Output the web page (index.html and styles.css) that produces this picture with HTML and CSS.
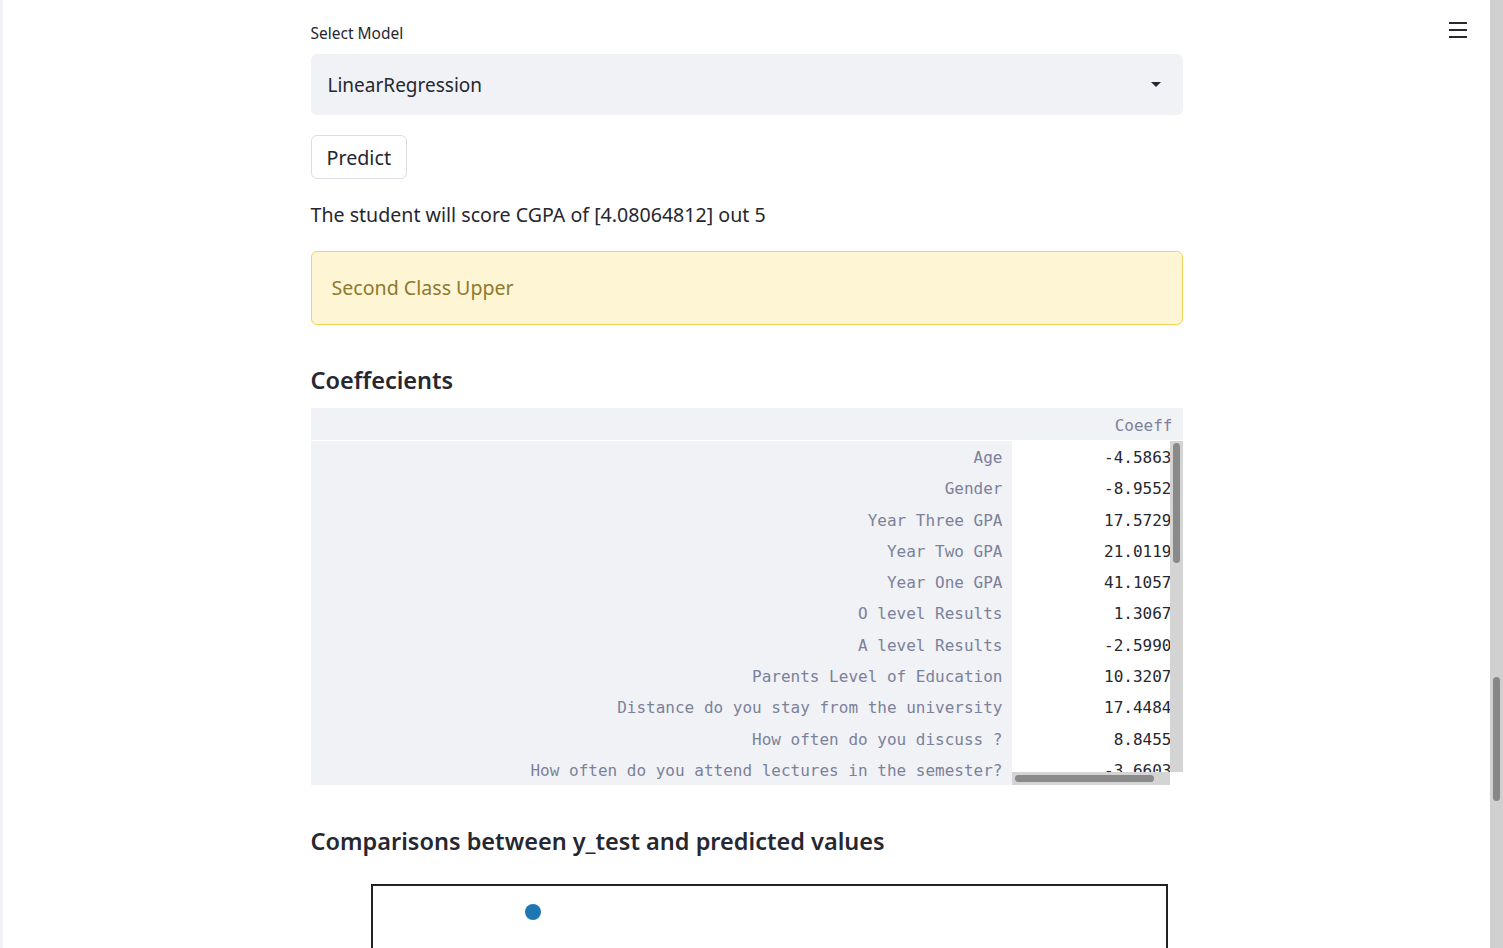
FILE: index.html
```html
<!DOCTYPE html>
<html>
<head>
<meta charset="utf-8">
<title>Student CGPA Prediction</title>
<link rel="stylesheet" href="styles.css">
</head>
<body>
<div class="app">
  <div class="sidebar-edge"></div>
  <main class="main">
    <div class="content">
      <label class="label">Select Model</label>
      <div class="select">
        <span>LinearRegression</span>
        <svg class="caret" width="10" height="5" viewBox="0 0 10 5"><path d="M0 0h10L5 5z" fill="#262730"/></svg>
      </div>
      <button class="btn">Predict</button>
      <p class="result">The student will score CGPA of [4.08064812] out 5</p>
      <div class="warning">Second Class Upper</div>
      <h3 class="heading h-coef">Coeffecients</h3>
      <div class="table">
        <div class="thead">
          <div class="th-index"></div>
          <div class="th-col">Coeeff</div>
        </div>
        <div class="tbody">
          <div class="index-col">
            <div class="cell">Age</div>
            <div class="cell">Gender</div>
            <div class="cell">Year Three GPA</div>
            <div class="cell">Year Two GPA</div>
            <div class="cell">Year One GPA</div>
            <div class="cell">O level Results</div>
            <div class="cell">A level Results</div>
            <div class="cell">Parents Level of Education</div>
            <div class="cell">Distance do you stay from the university</div>
            <div class="cell">How often do you discuss ?</div>
            <div class="cell">How often do you attend lectures in the semester?</div>
          </div>
          <div class="data-wrap">
            <div class="data-col">
              <div class="data-cells">
                <div class="cell">-4.5863</div>
                <div class="cell">-8.9552</div>
                <div class="cell">17.5729</div>
                <div class="cell">21.0119</div>
                <div class="cell">41.1057</div>
                <div class="cell">1.3067</div>
                <div class="cell">-2.5990</div>
                <div class="cell">10.3207</div>
                <div class="cell">17.4484</div>
                <div class="cell">8.8455</div>
                <div class="cell">-3.6603</div>
              </div>
              <div class="vscroll"><div class="vthumb"></div></div>
            </div>
            <div class="hscroll-row">
              <div class="hscroll"><div class="hthumb"></div></div>
              <div class="corner"></div>
            </div>
          </div>
        </div>
      </div>
      <h3 class="heading h-comp">Comparisons between y_test and predicted values</h3>
      <div class="chart">
        <div class="dot"></div>
      </div>
    </div>
  </main>
  <div class="page-scroll"><div class="page-thumb"></div></div>
  <div class="menu">
    <span></span><span></span><span></span>
  </div>
</div>
</body>
</html>
```
FILE: styles.css
```css
html, body {
  margin: 0;
  padding: 0;
  background: #ffffff;
}
body {
  font-family: "Noto Sans", "Open Sans", sans-serif;
  color: #262730;
}
.app {
  position: relative;
  display: flex;
  height: 948px;
  overflow: hidden;
}
.sidebar-edge {
  width: 3px;
  flex: none;
  background: #f0f2f6;
}
.main {
  flex: 1;
  min-width: 0;
}
.content {
  width: 872px;
  margin: 0 auto;
  padding-top: 21px;
  display: flex;
  flex-direction: column;
  align-items: flex-start;
}
.label {
  font-size: 15.5px;
  line-height: 25px;
  margin-bottom: 8px;
}
.select {
  box-sizing: border-box;
  width: 100%;
  height: 61px;
  background: #f0f2f6;
  border-radius: 6px;
  display: flex;
  align-items: center;
  justify-content: space-between;
  padding: 0 22px 0 17px;
  font-size: 19px;
}
.caret {
  display: block;
}
.btn {
  margin-top: 20px;
  box-sizing: border-box;
  height: 44px;
  padding: 0 15px;
  background: #fff;
  border: 1px solid #dcdde2;
  border-radius: 6px;
  font-family: inherit;
  font-size: 19.7px;
  color: #262730;
}
.result {
  margin: 20px 0 0;
  font-size: 19.6px;
  line-height: 32px;
}
.warning {
  box-sizing: border-box;
  margin-top: 20px;
  width: 100%;
  padding: 20px;
  background: #fdf5d3;
  border: 1px solid #f7d35c;
  border-radius: 6px;
  color: #8e7a2d;
  font-size: 19.6px;
  line-height: 32px;
}
.heading {
  margin: 0;
  font-size: 23.5px;
  line-height: 29px;
  font-weight: 600;
}
.h-coef {
  margin-top: 41px;
}
.table {
  margin-top: 13px;
  width: 100%;
  font-family: "DejaVu Sans Mono", "Liberation Mono", monospace;
  font-size: 16px;
}
.thead {
  display: flex;
  height: 32px;
  background: #f0f2f6;
  border-bottom: 1px solid #ffffff;
}
.th-index {
  flex: 1;
}
.th-col {
  width: 172px;
  box-sizing: border-box;
  padding-right: 10px;
  text-align: right;
  line-height: 35px;
  color: #7c819a;
}
.tbody {
  display: flex;
  height: 344px;
}
.index-col {
  flex: 1;
  background: #f0f2f6;
  overflow: hidden;
  padding-top: 1px;
}
.cell {
  height: 31.3px;
  line-height: 31.3px;
  padding-right: 9px;
  text-align: right;
  white-space: nowrap;
}
.index-col .cell {
  color: #7c819a;
}
.data-wrap {
  width: 171px;
  display: flex;
  flex-direction: column;
}
.data-col {
  display: flex;
  height: 331px;
  overflow: hidden;
}
.data-cells {
  width: 158px;
  background: #fff;
  color: #262730;
  padding-top: 1px;
}
.data-cells .cell {
  padding-right: 0;
  margin-right: -2px;
}
.vscroll {
  width: 13px;
  background: #d4d4d4;
  padding: 2px 3px;
  box-sizing: border-box;
}
.vthumb {
  height: 120px;
  background: #8a8a8a;
  border-radius: 4px;
}
.hscroll-row {
  display: flex;
  height: 13px;
}
.hscroll {
  width: 158px;
  background: #d4d4d4;
  padding: 3px 16px 3px 3px;
  box-sizing: border-box;
}
.hthumb {
  height: 7px;
  background: #8a8a8a;
  border-radius: 4px;
}
.corner {
  width: 13px;
  background: #fff;
}
.h-comp {
  margin-top: 42px;
}
.chart {
  position: relative;
  margin-top: 28px;
  margin-left: 60px;
  width: 797px;
  height: 120px;
  box-sizing: border-box;
  border: 2px solid #222;
}
.dot {
  position: absolute;
  left: 152px;
  top: 18px;
  width: 16px;
  height: 16px;
  border-radius: 50%;
  background: #1f77b4;
}
.page-scroll {
  width: 13px;
  flex: none;
  background: #d0d0d0;
  position: relative;
}
.page-thumb {
  position: absolute;
  left: 3px;
  top: 677px;
  width: 7px;
  height: 124px;
  border-radius: 4px;
  background: #878787;
}
.menu {
  position: absolute;
  top: 22px;
  left: 1449px;
  width: 18px;
  display: flex;
  flex-direction: column;
  gap: 5px;
}
.menu span {
  display: block;
  height: 2px;
  background: #262730;
}
```
